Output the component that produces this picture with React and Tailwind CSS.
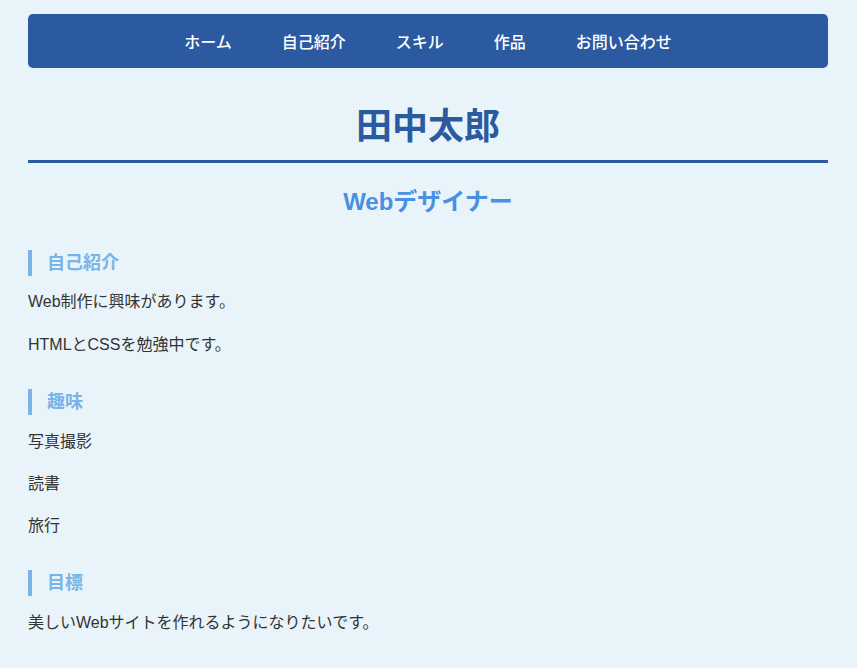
import React from 'react';

const navItems = ['ホーム', '自己紹介', 'スキル', '作品', 'お問い合わせ'];

function SectionTitle({ children }) {
  return (
    <h2 className="mt-[31px] mb-[14px] border-l-4 border-[#7ab3e8] pl-[15px] text-[18px] font-bold leading-[26px] text-[#7ab3e8]">
      {children}
    </h2>
  );
}

export default function App() {
  return (
    <div
      className="min-h-screen bg-[#e8f4fa] pt-[14px] pb-8 text-[16px] text-[#333333]"
      style={{ fontFamily: '"Liberation Sans", "Noto Sans CJK JP", sans-serif' }}
    >
      <div className="ml-[28px] w-[800px]">
        <nav className="flex h-[54px] items-center justify-center rounded-[5px] bg-[#2b5aa0]">
          {navItems.map(item => (
            <a key={item} href="#" className="px-[25px] pt-[3px] text-[16px] font-medium leading-[26px] text-white">
              {item}
            </a>
          ))}
        </nav>

        <h1 className="mt-[37px] border-b-[3px] border-[#2b5aa0] pb-[11px] text-center text-[36px] font-bold leading-[44px] text-[#2b5aa0]">
          田中太郎
        </h1>
        <p className="mt-[23px] text-center text-[24px] font-bold leading-[32px] text-[#4a90e2]">Webデザイナー</p>

        <section className="mt-[32px]">
          <h2 className="mb-[13px] border-l-4 border-[#7ab3e8] pl-[15px] text-[18px] font-bold leading-[26px] text-[#7ab3e8]">自己紹介</h2>
          <p className="mb-[17px] leading-[26px]">Web制作に興味があります。</p>
          <p className="leading-[26px]">HTMLとCSSを勉強中です。</p>
        </section>

        <section>
          <SectionTitle>趣味</SectionTitle>
          <ul className="flex flex-col gap-[16px]">
            <li className="leading-[26px]">写真撮影</li>
            <li className="leading-[26px]">読書</li>
            <li className="leading-[26px]">旅行</li>
          </ul>
        </section>

        <section>
          <SectionTitle>目標</SectionTitle>
          <p className="leading-[26px]">美しいWebサイトを作れるようになりたいです。</p>
        </section>
      </div>
    </div>
  );
}
